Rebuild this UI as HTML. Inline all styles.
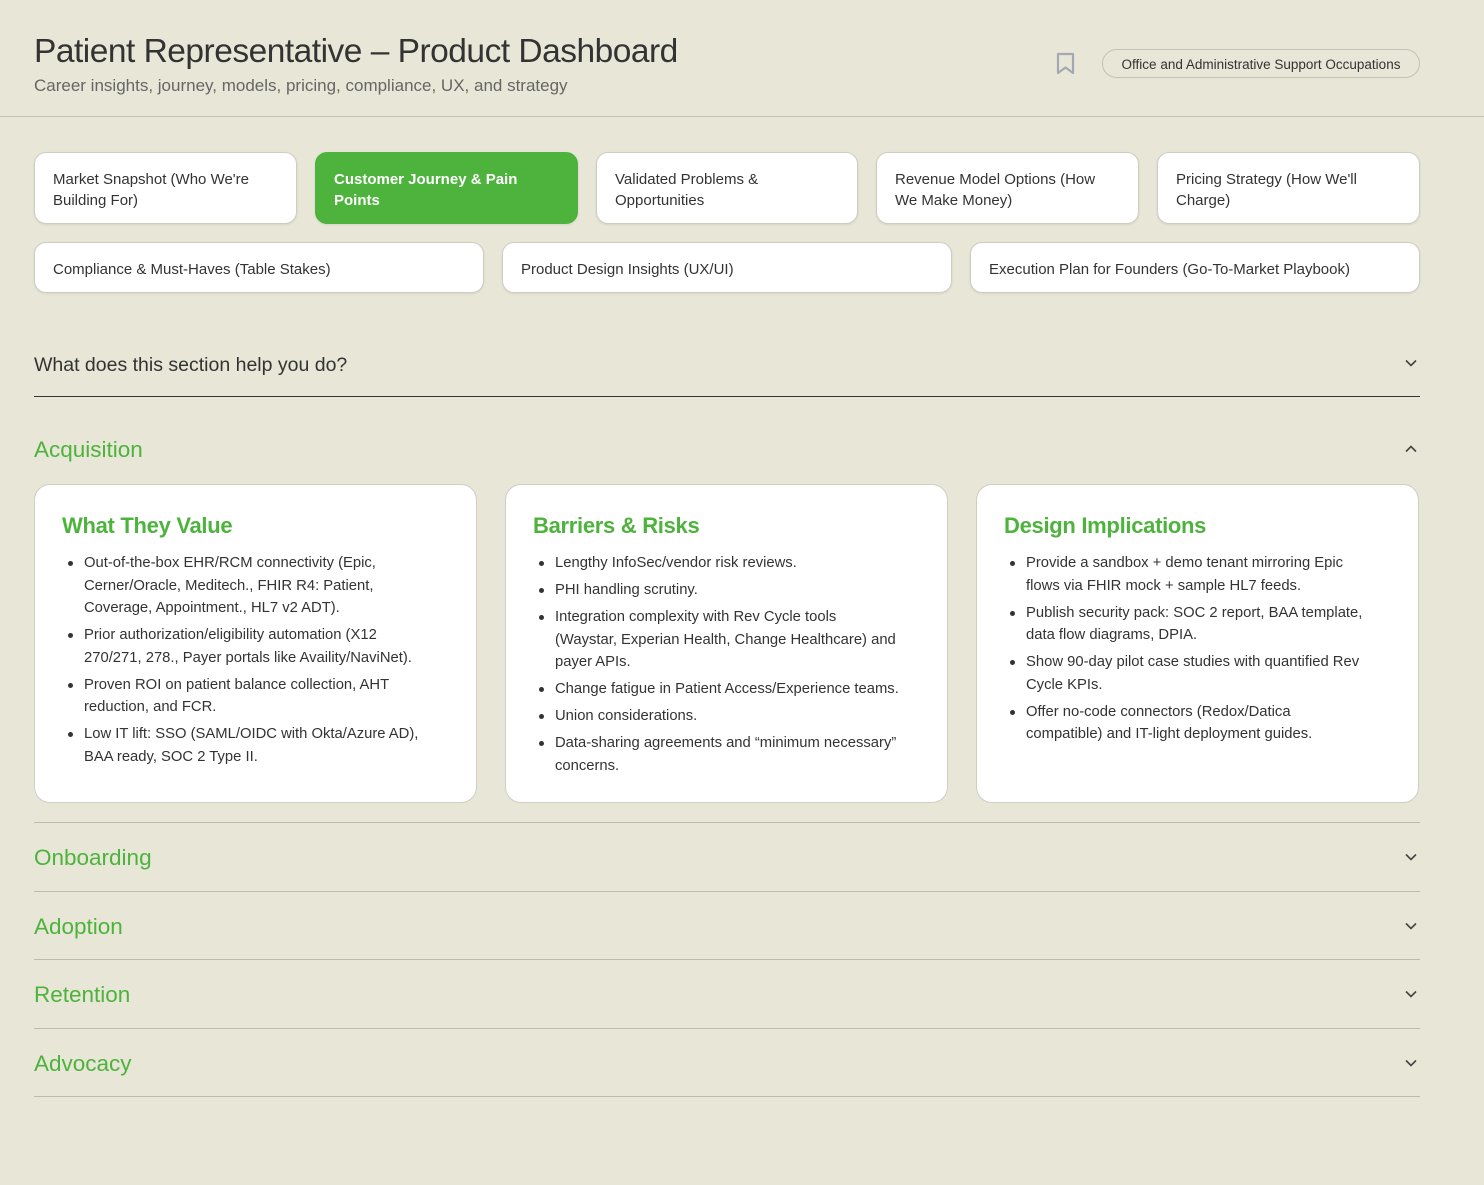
<!DOCTYPE html>
<html><head><meta charset="utf-8"><style>
*{box-sizing:border-box;margin:0;padding:0}
body{width:1484px;height:1185px;background:#e8e6d6;font-family:"Liberation Sans",sans-serif;color:#333;position:relative;overflow:hidden}
.a{position:absolute;white-space:nowrap}
h1{position:absolute;left:34px;top:33px;font-size:33.5px;font-weight:normal;color:#333;letter-spacing:-0.5px}
.sub{left:34px;top:76px;font-size:17px;color:#666}
.hr{position:absolute;left:0;width:1484px;height:1px;background:#c6c4b6;top:116px}
.tab{position:absolute;background:#fff;border:1px solid #cfcdc2;border-radius:12px;font-size:15px;line-height:21px;padding:4px 18px 0;display:flex;align-items:center;color:#333;box-shadow:0 1px 2px rgba(0,0,0,.08)}
.tab.on{background:#4db33d;color:#fff;border-color:#4db33d;font-weight:bold}
.pill{left:1102px;top:49px;width:318px;height:29px;border:1px solid #c4c2b5;border-radius:15px;font-size:13.5px;text-align:center;line-height:30px;color:#333}
.sec{position:absolute;left:34px;font-size:22.5px;color:#4db33d}
.line{position:absolute;left:34px;width:1386px;height:1px;background:#bdbbb0}
.chev{position:absolute;left:1405px;width:12px;height:8px}
.card{position:absolute;top:484px;width:443px;height:319px;background:#fff;border:1px solid #d0cec3;border-radius:16px;padding:28px 27px}
.card h3{font-size:22px;color:#4db33d;font-weight:bold;margin-bottom:13px;letter-spacing:-0.3px}
.card ul{list-style:none}
.card li{position:relative;padding-left:22px;font-size:14.8px;line-height:22.5px;margin-bottom:4.5px;white-space:nowrap;color:#333}
.card li:before{content:"";position:absolute;left:6px;top:9px;width:5px;height:5px;border-radius:50%;background:#333}
</style></head><body>
<h1>Patient Representative – Product Dashboard</h1>
<div class="a sub">Career insights, journey, models, pricing, compliance, UX, and strategy</div>
<svg class="a" style="left:1056px;top:52px" width="19" height="23" viewBox="0 0 19 23"><path d="M2 2h15v19l-7.5-5.5L2 21z" fill="none" stroke="#a3a8b4" stroke-width="2.2" stroke-linejoin="round"/></svg>
<div class="a pill">Office and Administrative Support Occupations</div>
<div class="hr"></div>

<div class="tab" style="left:34px;top:152px;width:263px;height:72px">Market Snapshot (Who We're<br>Building For)</div>
<div class="tab on" style="left:315px;top:152px;width:263px;height:72px">Customer Journey &amp; Pain<br>Points</div>
<div class="tab" style="left:596px;top:152px;width:262px;height:72px">Validated Problems &amp;<br>Opportunities</div>
<div class="tab" style="left:876px;top:152px;width:263px;height:72px">Revenue Model Options (How<br>We Make Money)</div>
<div class="tab" style="left:1157px;top:152px;width:263px;height:72px">Pricing Strategy (How We'll<br>Charge)</div>
<div class="tab" style="left:34px;top:242px;width:450px;height:51px">Compliance &amp; Must-Haves (Table Stakes)</div>
<div class="tab" style="left:502px;top:242px;width:450px;height:51px">Product Design Insights (UX/UI)</div>
<div class="tab" style="left:970px;top:242px;width:450px;height:51px">Execution Plan for Founders (Go-To-Market Playbook)</div>

<div class="a" style="left:34px;top:354px;font-size:19.5px;color:#333">What does this section help you do?</div>
<svg class="chev" style="top:359px" viewBox="0 0 12 8"><path d="M1 1.5l5 5 5-5" fill="none" stroke="#444" stroke-width="1.6"/></svg>
<div class="line" style="top:396px;background:#333"></div>

<div class="sec" style="top:437px">Acquisition</div>
<svg class="chev" style="top:445px" viewBox="0 0 12 8"><path d="M1 6.5l5-5 5 5" fill="none" stroke="#444" stroke-width="1.6"/></svg>

<div class="card" style="left:34px"><h3>What They Value</h3><ul>
<li>Out-of-the-box EHR/RCM connectivity (Epic,<br>Cerner/Oracle, Meditech., FHIR R4: Patient,<br>Coverage, Appointment., HL7 v2 ADT).</li>
<li>Prior authorization/eligibility automation (X12<br>270/271, 278., Payer portals like Availity/NaviNet).</li>
<li>Proven ROI on patient balance collection, AHT<br>reduction, and FCR.</li>
<li>Low IT lift: SSO (SAML/OIDC with Okta/Azure AD),<br>BAA ready, SOC 2 Type II.</li></ul></div>
<div class="card" style="left:505px"><h3>Barriers &amp; Risks</h3><ul>
<li>Lengthy InfoSec/vendor risk reviews.</li>
<li>PHI handling scrutiny.</li>
<li>Integration complexity with Rev Cycle tools<br>(Waystar, Experian Health, Change Healthcare) and<br>payer APIs.</li>
<li>Change fatigue in Patient Access/Experience teams.</li>
<li>Union considerations.</li>
<li>Data-sharing agreements and “minimum necessary”<br>concerns.</li></ul></div>
<div class="card" style="left:976px"><h3>Design Implications</h3><ul>
<li>Provide a sandbox + demo tenant mirroring Epic<br>flows via FHIR mock + sample HL7 feeds.</li>
<li>Publish security pack: SOC 2 report, BAA template,<br>data flow diagrams, DPIA.</li>
<li>Show 90-day pilot case studies with quantified Rev<br>Cycle KPIs.</li>
<li>Offer no-code connectors (Redox/Datica<br>compatible) and IT-light deployment guides.</li></ul></div>

<div class="line" style="top:822px"></div>
<div class="sec" style="top:845px">Onboarding</div>
<svg class="chev" style="top:853px" viewBox="0 0 12 8"><path d="M1 1.5l5 5 5-5" fill="none" stroke="#444" stroke-width="1.6"/></svg>
<div class="line" style="top:891px"></div>
<div class="sec" style="top:914px">Adoption</div>
<svg class="chev" style="top:922px" viewBox="0 0 12 8"><path d="M1 1.5l5 5 5-5" fill="none" stroke="#444" stroke-width="1.6"/></svg>
<div class="line" style="top:959px"></div>
<div class="sec" style="top:982px">Retention</div>
<svg class="chev" style="top:990px" viewBox="0 0 12 8"><path d="M1 1.5l5 5 5-5" fill="none" stroke="#444" stroke-width="1.6"/></svg>
<div class="line" style="top:1028px"></div>
<div class="sec" style="top:1051px">Advocacy</div>
<svg class="chev" style="top:1059px" viewBox="0 0 12 8"><path d="M1 1.5l5 5 5-5" fill="none" stroke="#444" stroke-width="1.6"/></svg>
<div class="line" style="top:1096px"></div>
</body></html>
